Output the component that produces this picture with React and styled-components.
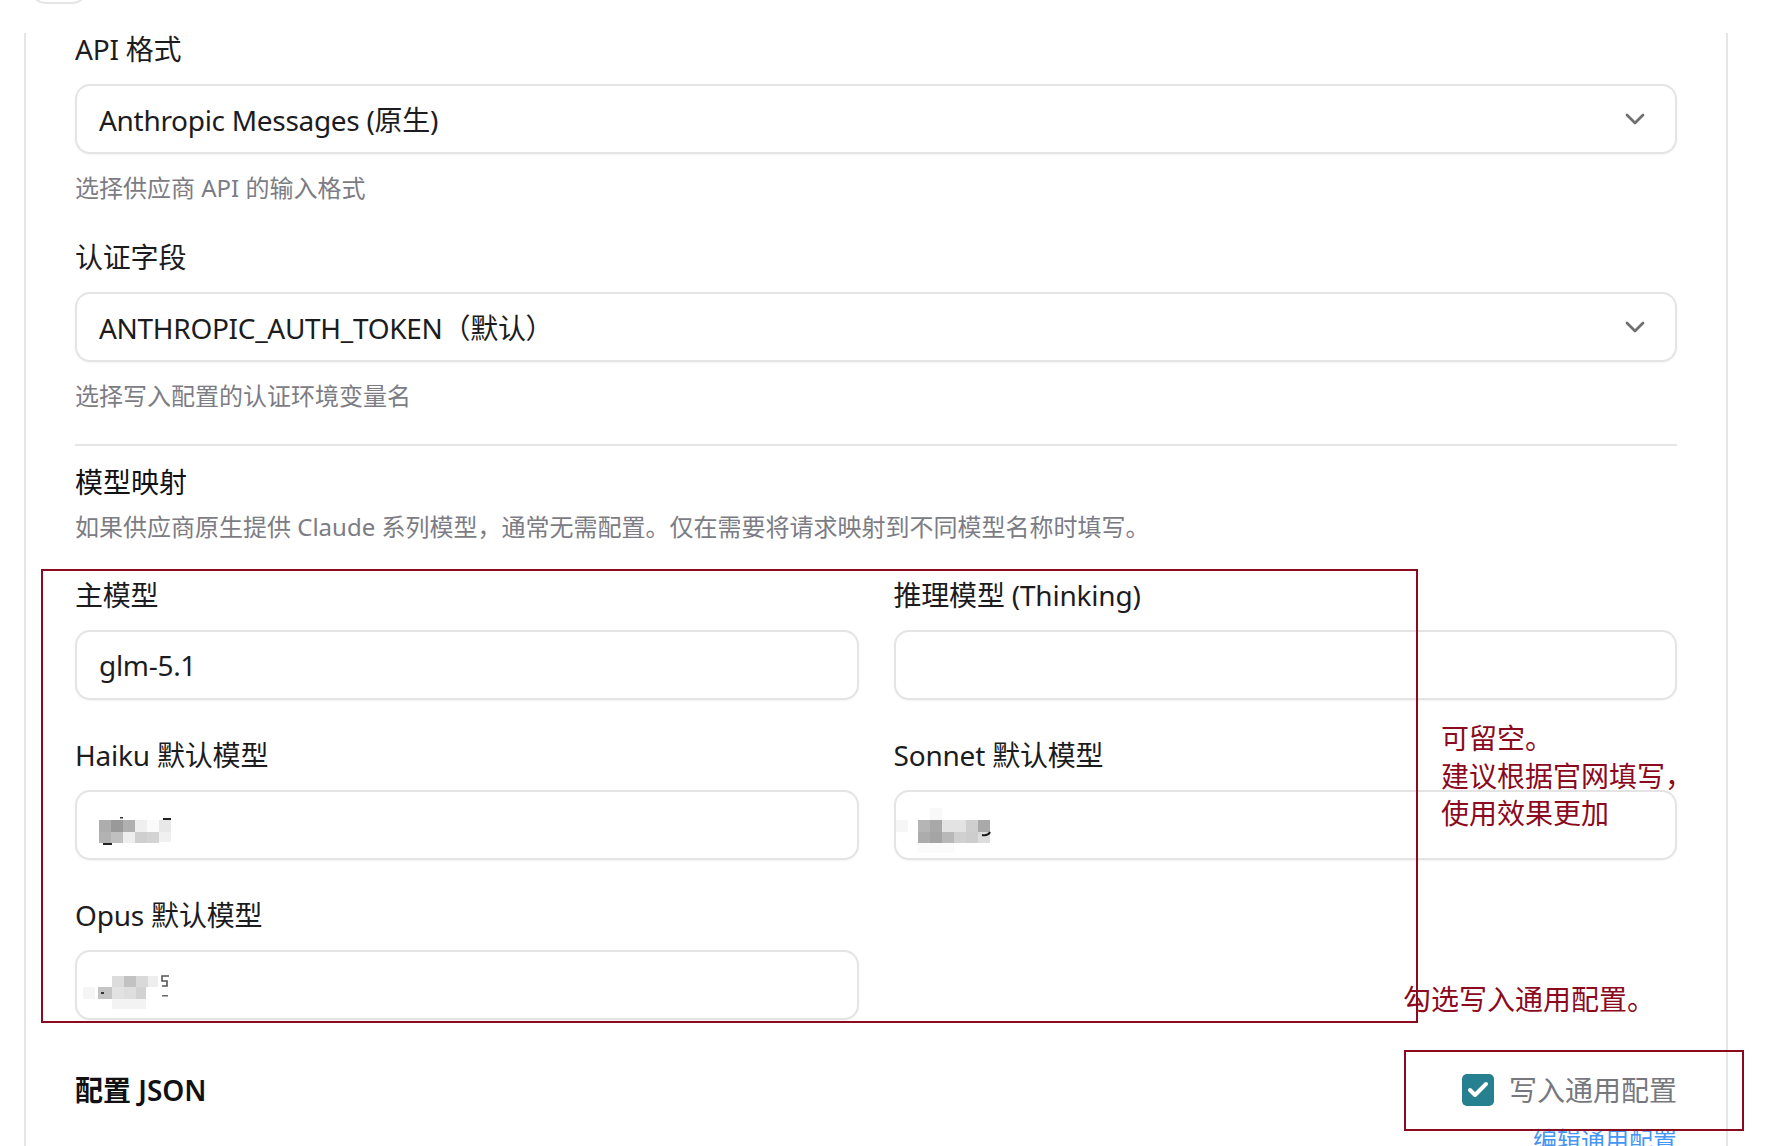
import styled, { createGlobalStyle } from "styled-components";
import { ChevronDown, Check } from "lucide-react";

const GlobalStyle = createGlobalStyle`
  html, body {
    margin: 0;
    padding: 0;
    background: #ffffff;
  }
  body {
    font-family: "Noto Sans", "Noto Sans CJK SC", sans-serif;
    color: #1c1c1e;
  }
  * {
    box-sizing: border-box;
  }
`;

// page frame
const Page = styled.div`
  position: relative;
  width: 1773px;
  height: 1146px;
  overflow: hidden;
`;

const TopStub = styled.div`
  width: 58px;
  height: 40px;
  margin: -36px 0 0 30px;
  border: 2px solid #e5e5e5;
  border-radius: 16px;
`;

const Panel = styled.section`
  margin: 29px 0 0 24px;
  width: 1704px;
  min-height: 1130px;
  padding: 0 49px;
  border-left: 2px solid #e6e6e6;
  border-right: 2px solid #e6e6e6;
  display: flex;
  flex-direction: column;
`;

// form parts
const Field = styled.div`
  display: flex;
  flex-direction: column;
  margin-top: ${(p) => p.$top || 0}px;
`;

const Label = styled.label`
  font-size: 28px;
  line-height: 36px;
  font-weight: 400;
  letter-spacing: -0.2px;
  color: #1c1c1e;
  margin-bottom: 17px;
`;

const Help = styled.p`
  margin: 18px 0 0;
  font-size: 24px;
  line-height: 32px;
  color: #7c7c84;
`;

const Box = styled.div`
  height: 70px;
  border: 2px solid #e4e4e4;
  border-radius: 15px;
  background: #ffffff;
  box-shadow: 0 1px 2px rgba(0, 0, 0, 0.05);
  padding: 0 24px 0 22px;
  display: flex;
  align-items: center;
  justify-content: space-between;
  font-size: 28px;
  letter-spacing: -0.3px;
  color: #1c1c1e;
  white-space: nowrap;
`;

const Divider = styled.hr`
  margin: 32px 0 0;
  border: none;
  height: 2px;
  background: #e6e6e6;
`;

const SectionTitle = styled.h3`
  margin: ${(p) => p.$top || 0}px 0 0;
  font-size: 28px;
  line-height: 36px;
  font-weight: ${(p) => p.$weight || 400};
  color: #111114;
`;

const Description = styled.p`
  margin: 11px 0 0;
  font-size: 24px;
  line-height: 32px;
  color: #7c7c84;
  white-space: nowrap;
`;

const ModelGrid = styled.div`
  margin-top: 34px;
  display: grid;
  grid-template-columns: 1fr 1fr;
  column-gap: 35px;
  row-gap: 37px;
`;

const Cell = styled.div`
  display: flex;
  flex-direction: column;
`;

const JsonRow = styled.div`
  margin-top: 52px;
  display: flex;
  align-items: center;
  justify-content: space-between;
`;

const CheckLabel = styled.label`
  display: flex;
  align-items: center;
  gap: 15px;
  font-size: 28px;
  line-height: 36px;
  color: #77777e;
`;

const CheckSquare = styled.span`
  width: 32px;
  height: 32px;
  border-radius: 5px;
  background: #26808f;
  display: flex;
  align-items: center;
  justify-content: center;
  color: #ffffff;
`;

const LinkRow = styled.div`
  margin-top: 16px;
  display: flex;
  justify-content: flex-end;
`;

const EditLink = styled.a`
  font-size: 24px;
  line-height: 32px;
  color: #4596f5;
  text-decoration: none;
`;

// annotations drawn on top of the screenshot
const MarkBox = styled.div`
  position: absolute;
  left: ${(p) => p.$x}px;
  top: ${(p) => p.$y}px;
  width: ${(p) => p.$w}px;
  height: ${(p) => p.$h}px;
  border: 2px solid #8b0a1e;
  pointer-events: none;
`;

const Note = styled.div`
  position: absolute;
  left: ${(p) => p.$x}px;
  top: ${(p) => p.$y}px;
  font-size: 28px;
  line-height: 37.5px;
  color: #8b0a1e;
  white-space: nowrap;
`;

const MosaicSvg = styled.svg`
  overflow: visible;
  flex-shrink: 0;
`;

const haikuCells = [
  [0, 28, 12, 12, "#adadad"], [12, 28, 12, 12, "#999999"], [24, 28, 12, 12, "#b0b0b0"],
  [36, 28, 12, 12, "#efefef"], [48, 28, 12, 12, "#fafafa"], [60, 28, 12, 12, "#e8e8e8"],
  [0, 40, 12, 11, "#b2b2b2"], [12, 40, 12, 11, "#c0c0c0"], [24, 40, 12, 11, "#eeeeee"],
  [36, 40, 12, 11, "#cfcfcf"], [48, 40, 12, 11, "#d3d3d3"], [60, 40, 12, 10, "#f0f0f0"],
  [21, 25, 3, 1.5, "#333333"], [64, 26, 8, 2, "#222222"], [4, 51, 9, 2, "#222222"],
];

const sonnetCells = [
  [-22, 28, 12, 12, "#f6f6f6"], [12, 16, 12, 12, "#f8f8f8"], [0, 51, 36, 10, "#fbfbfb"],
  [0, 28, 12, 12, "#b5b5b5"], [12, 28, 12, 12, "#a8a8a8"], [24, 28, 12, 12, "#e3e3e3"],
  [36, 28, 12, 12, "#e3e3e3"], [48, 28, 12, 12, "#cfcfcf"], [60, 28, 12, 12, "#a9a9a9"],
  [0, 40, 12, 11, "#acacac"], [12, 40, 12, 11, "#a4a4a4"], [24, 40, 12, 11, "#b8b8b8"],
  [36, 40, 12, 11, "#d0d0d0"], [48, 40, 12, 11, "#cdcdcd"], [60, 40, 12, 11, "#dcdcdc"],
];

const opusCells = [
  [13, 24, 12, 11, "#dcdcdc"], [25, 24, 12, 11, "#c2c2c2"], [37, 24, 12, 11, "#d9d9d9"],
  [49, 24, 10, 11, "#eeeeee"], [-16, 35, 12, 12, "#f5f5f5"], [-1, 35, 14, 12, "#c4c4c4"],
  [13, 35, 12, 12, "#e2e2e2"], [25, 35, 12, 12, "#dedede"], [37, 35, 10, 12, "#d2d2d2"],
  [13, 47, 34, 10, "#f3f3f3"], [63, 43, 6, 1.5, "#666666"], [2, 40, 3, 2, "#333333"],
];

function Mosaic({ cells, mark }) {
  return (
    <MosaicSvg width="90" height="66" viewBox="0 0 90 66">
      {cells.map(([x, y, w, h, c], i) => (
        <rect key={i} x={x} y={y} width={w} height={h} fill={c} />
      ))}
      {mark}
    </MosaicSvg>
  );
}

function SelectField({ label, value, help, top }) {
  return (
    <Field $top={top}>
      <Label>{label}</Label>
      <Box>
        <span>{value}</span>
        <ChevronDown size={32} strokeWidth={2} color="#6f6f6f" />
      </Box>
      <Help>{help}</Help>
    </Field>
  );
}

function ModelInput({ label, children }) {
  return (
    <Cell>
      <Label>{label}</Label>
      <Box>{children}</Box>
    </Cell>
  );
}

export default function App() {
  return (
    <Page>
      <GlobalStyle />
      <TopStub />
      <Panel>
        <SelectField
          top={-2}
          label="API 格式"
          value="Anthropic Messages (原生)"
          help="选择供应商 API 的输入格式"
        />
        <SelectField
          top={35}
          label="认证字段"
          value="ANTHROPIC_AUTH_TOKEN（默认）"
          help="选择写入配置的认证环境变量名"
        />
        <Divider />
        <SectionTitle $top={18}>模型映射</SectionTitle>
        <Description>
          如果供应商原生提供 Claude 系列模型，通常无需配置。仅在需要将请求映射到不同模型名称时填写。
        </Description>
        <ModelGrid>
          <ModelInput label="主模型">
            <span>glm-5.1</span>
          </ModelInput>
          <ModelInput label="推理模型 (Thinking)" />
          <ModelInput label="Haiku 默认模型">
            <Mosaic cells={haikuCells} />
          </ModelInput>
          <ModelInput label="Sonnet 默认模型">
            <Mosaic
              cells={sonnetCells}
              mark={<path d="M64 43 q6 1 8 -3" stroke="#1a1a1a" strokeWidth="2" fill="none" />}
            />
          </ModelInput>
          <ModelInput label="Opus 默认模型">
            <Mosaic
              cells={opusCells}
              mark={<path d="M70 24 h-7 v5 h5 v5 h-5" stroke="#555555" strokeWidth="1.6" fill="none" />}
            />
          </ModelInput>
        </ModelGrid>
        <JsonRow>
          <SectionTitle $weight={600}>配置 JSON</SectionTitle>
          <CheckLabel>
            <CheckSquare>
              <Check size={24} strokeWidth={4} />
            </CheckSquare>
            写入通用配置
          </CheckLabel>
        </JsonRow>
        <LinkRow>
          <EditLink href="#">编辑通用配置</EditLink>
        </LinkRow>
      </Panel>

      <MarkBox $x={41} $y={569} $w={1377} $h={454} />
      <MarkBox $x={1404} $y={1050} $w={340} $h={81} />
      <Note $x={1441} $y={720}>
        可留空。
        <br />
        建议根据官网填写，
        <br />
        使用效果更加
      </Note>
      <Note $x={1403} $y={981}>勾选写入通用配置。</Note>
    </Page>
  );
}
